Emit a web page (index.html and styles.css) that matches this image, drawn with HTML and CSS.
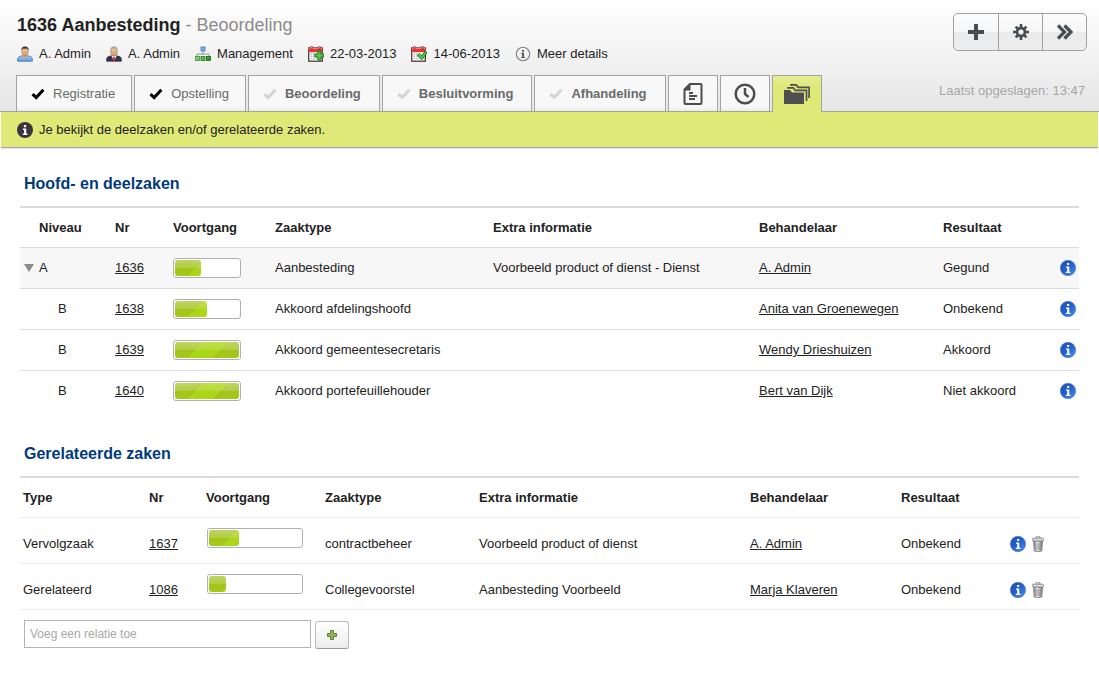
FILE: index.html
```
<!DOCTYPE html>
<html lang="nl">
<head>
<meta charset="utf-8">
<title>1636 Aanbesteding - Beoordeling</title>
<link rel="stylesheet" href="styles.css">
</head>
<body>
<svg class="defs" width="0" height="0" aria-hidden="true">
  <defs>
    <linearGradient id="g-blue" x1="0" y1="0" x2="1" y2="1"><stop offset="0" stop-color="#1d4fb4"/><stop offset=".5" stop-color="#2560cf"/><stop offset="1" stop-color="#4b93f0"/></linearGradient>
    <linearGradient id="g-skin" x1="0" y1="0" x2="0" y2="1"><stop offset="0" stop-color="#f2cfa6"/><stop offset="1" stop-color="#d29a66"/></linearGradient>
    <linearGradient id="g-shirt" x1="0" y1="0" x2="0" y2="1"><stop offset="0" stop-color="#a5cdf2"/><stop offset="1" stop-color="#5c98d6"/></linearGradient>
    <linearGradient id="g-bin" x1="0" y1="0" x2="1" y2="0"><stop offset="0" stop-color="#8a8a8a"/><stop offset=".45" stop-color="#f4f4f4"/><stop offset="1" stop-color="#7a7a7a"/></linearGradient>
    <symbol id="check" viewBox="0 0 14 12"><path d="M1.5 6.2 L5.2 9.6 L12.4 1.8" fill="none" stroke="currentColor" stroke-width="3"/></symbol>
    <symbol id="info-blue" viewBox="0 0 16 16"><circle cx="8" cy="8" r="7.7" fill="url(#g-blue)" stroke="#4b78c4" stroke-width=".6"/><path d="M7 3h2.2v2H7zM6 6.5h3.3v5.2h1.2V13H5.8v-1.3h1.4V7.8H6z" fill="#fff"/></symbol>
    <symbol id="bin" viewBox="0 0 12 16"><path d="M1.5 5h9l-.7 10q-3.8 1.2-7.6 0z" fill="url(#g-bin)" stroke="#777" stroke-width=".8"/><path d="M3.8 7l.3 7M6 7v7M8.2 7l-.3 7" stroke="#777" stroke-width=".8"/><rect x=".5" y="2.2" width="11" height="2.8" rx="1" fill="#dedede" stroke="#777" stroke-width=".8"/><path d="M4 2V.8h4V2" fill="none" stroke="#888" stroke-width=".9"/></symbol>
    <symbol id="calendar" viewBox="0 0 16 16"><rect x=".7" y="2" width="13.6" height="13.2" fill="#f7fafa" stroke="#4c2b2b" stroke-width="1.2"/><path d="M.4 1.6h14.2v4.6H.4z" fill="#e63636"/><path d="M1 2.6h13" stroke="#f88080"/><path d="M3.5 0v3.4M11.5 0v3.4" stroke="#8a2525" stroke-width="1.8"/><path d="M3.5 .5v2M11.5 .5v2" stroke="#eee" stroke-width=".7"/><path d="M2.5 8h5M2.5 10.3h5M2.5 12.6h6" stroke="#b3c9ca" stroke-width="1.4" stroke-dasharray="1.8 .7"/></symbol>
  </defs>
</svg>

<header class="case-header">
  <div class="case-top">
    <div class="case-info">
      <h1 class="case-title">1636 Aanbesteding <span class="case-phase">- Beoordeling</span></h1>
      <ul class="meta">
        <li><svg class="icon" viewBox="0 0 16 16"><path d="M.6 15.3V13q0-2.4 4.2-3.2h6.4q4.2.8 4.2 3.2v2.3z" fill="url(#g-shirt)" stroke="#4b80bb" stroke-width=".8"/><path d="M5.6 8.5h4.8v1.8L8 12.2l-2.4-1.9z" fill="#d59d6b"/><ellipse cx="8" cy="5.4" rx="3.3" ry="4.3" fill="url(#g-skin)" stroke="#a47549" stroke-width=".4"/><path d="M4.5 5Q3.8.4 8 .4T11.5 5Q11 3 9.8 2.4q-2.6.6-4 .4-.9.600-1.300 2.200z" fill="#4a3226"/></svg>A. Admin</li>
        <li><svg class="icon" viewBox="0 0 16 16"><path d="M.6 15.3V13q0-2.4 4.2-3.2h6.4q4.2.8 4.2 3.2v2.3z" fill="#33334b" stroke="#20202f" stroke-width=".6"/><path d="M5.2 9.5h5.6L8 15.3z" fill="#f3f3f6"/><path d="M7.3 10.7h1.4l.5 3.5L8 15.3l-1.2-1.1z" fill="#d02a2a"/><ellipse cx="8" cy="5.4" rx="3.3" ry="4.3" fill="url(#g-skin)" stroke="#94673f" stroke-width=".5"/><path d="M4.500 5Q3.800.4 8 .4T11.500 5Q11 3 9.800 2.400q-2.600.6-4 .4-.9.600-1.300 2.200z" fill="#a8a49e"/></svg>A. Admin</li>
        <li><svg class="icon" viewBox="0 0 16 16"><path d="M8 5v4M2 11V8h12v3" fill="none" stroke="#8f9699" stroke-width="1"/><rect x="6" y="1" width="4" height="4" fill="#78b0f0" stroke="#4278c2" stroke-width=".8"/><rect x=".5" y="10.5" width="4" height="4" fill="#83cf74" stroke="#3f8e34" stroke-width=".8"/><rect x="6" y="10.5" width="4" height="4" fill="#5cb950" stroke="#2b7c25" stroke-width=".8"/><rect x="11.5" y="10.5" width="4" height="4" fill="#2e9c28" stroke="#176a14" stroke-width=".8"/></svg>Management</li>
        <li><svg class="icon" viewBox="0 0 16 16"><use href="#calendar"/><path d="M9.8 5h3v3h3v3h-3v3h-3v-3h-3V8h3z" fill="#55c14a" stroke="#18731b" stroke-width=".9"/></svg>22-03-2013</li>
        <li><svg class="icon" viewBox="0 0 16 16"><use href="#calendar"/><path d="M6.3 9.5l2-2 2.3 2.3L14.5 5l1.3 2-5 6.8z" fill="#55c14a" stroke="#18731b" stroke-width=".9"/></svg>14-06-2013</li>
        <li><svg class="icon" viewBox="0 0 16 16"><circle cx="8" cy="8" r="6.7" fill="#f2f2f2" stroke="#828282" stroke-width="1.1"/><path d="M7.1 4H9v1.700H7.100zM6.300 6.700H9V11h.9v1H6.200v-1h.9V7.700h-.8z" fill="#555"/></svg><a class="plain" href="#details">Meer details</a></li>
      </ul>
    </div>
    <div class="actions">
      <button type="button" aria-label="Toevoegen"><svg width="16" height="16" viewBox="0 0 16 16"><path d="M6 0h4v6h6v4h-6v6H6v-6H0V6h6z" fill="#474e53"/></svg></button>
      <button type="button" aria-label="Instellingen"><svg width="16" height="16" viewBox="0 0 16 16"><g stroke="#474e53" stroke-width="2.6"><path d="M8 0v4M8 12v4M0 8h4M12 8h4M2.6 2.6l2.6 2.6M10.8 10.8l2.6 2.6M2.6 13.4l2.6-2.6M10.8 5.2l2.6-2.6"/></g><circle cx="8" cy="8" r="4" fill="none" stroke="#474e53" stroke-width="2.8"/></svg></button>
      <button type="button" aria-label="Volgende fase"><svg width="16" height="16" viewBox="0 0 16 16"><path d="M1 1.500l6.500 6.500L1 14.500M7.500 1.500L14 8l-6.500 6.500" fill="none" stroke="#474e53" stroke-width="3.2"/></svg></button>
    </div>
  </div>
  <div class="tab-row">
    <nav class="tabs" aria-label="Fasen">
      <a class="tab" href="#registratie"><svg class="check done"><use href="#check"/></svg>Registratie</a>
      <a class="tab" href="#opstelling"><svg class="check done"><use href="#check"/></svg>Opstelling</a>
      <a class="tab open" href="#beoordeling"><svg class="check"><use href="#check"/></svg>Beoordeling</a>
      <a class="tab open" href="#besluitvorming"><svg class="check"><use href="#check"/></svg>Besluitvorming</a>
      <a class="tab open" href="#afhandeling"><svg class="check"><use href="#check"/></svg>Afhandeling</a>
      <a class="tab icon-tab" href="#documenten" aria-label="Documenten"><svg width="20" height="22" viewBox="0 0 20 22"><path d="M7 1h10.5q1 0 1 1v18q0 1-1 1h-15q-1 0-1-1V6.5z" fill="none" stroke="#4c4c4c" stroke-width="2"/><path d="M1 7.5L7.5 1v6.5z" fill="#4c4c4c"/><path d="M6 10h4M6 13h8M6 16h6" stroke="#4c4c4c" stroke-width="1.8"/></svg></a>
      <a class="tab icon-tab" href="#tijdlijn" aria-label="Tijdlijn"><svg width="22" height="22" viewBox="0 0 22 22"><circle cx="11" cy="11" r="9.3" fill="none" stroke="#4c4c4c" stroke-width="2.5"/><path d="M11 5v6l3.500 3" fill="none" stroke="#4c4c4c" stroke-width="2.500"/></svg></a>
      <a class="tab icon-tab active" href="#relaties" aria-label="Relaties" aria-current="page"><svg width="26" height="20" viewBox="0 0 26 20"><path d="M0 6h6l2 2.500h12V20H0z" fill="#4f4f4f"/><path d="M3 3.800h6.200l2 2.500h11.300V17M6 .9h6.200l2 2.500H25.100V14" fill="none" stroke="#4f4f4f" stroke-width="1.700"/></svg></a>
    </nav>
    <p class="saved">Laatst opgeslagen: 13:47</p>
  </div>
</header>

<p class="notice"><svg class="icon" viewBox="0 0 16 16"><circle cx="8" cy="8" r="8" fill="#38353f"/><path d="M6.9 3h2.200v2.200H6.900zM6 6.500h3.200v5h1.200V13H5.800v-1.500h1.300V8H6z" fill="#fff"/></svg>Je bekijkt de deelzaken en/of gerelateerde zaken.</p>

<main class="content">
  <section>
    <h2 class="section-title">Hoofd- en deelzaken</h2>
    <table class="cases main-cases">
      <colgroup><col class="m1"><col class="m2"><col class="m3"><col class="m4"><col class="m5"><col class="m6"><col class="m7"><col class="m8"></colgroup>
      <thead><tr><th class="level">Niveau</th><th>Nr</th><th>Voortgang</th><th>Zaaktype</th><th>Extra informatie</th><th>Behandelaar</th><th>Resultaat</th><th></th></tr></thead>
      <tbody>
        <tr class="current"><td><button class="toggle" type="button" aria-label="Inklappen"></button>A</td><td><a href="#1636">1636</a></td><td><div class="bar"><div class="fill" style="width:41%"></div></div></td><td>Aanbesteding</td><td>Voorbeeld product of dienst - Dienst</td><td><a href="#admin">A. Admin</a></td><td>Gegund</td><td><a class="act" href="#info" aria-label="Info"><svg class="icon"><use href="#info-blue"/></svg></a></td></tr>
        <tr><td class="sub">B</td><td><a href="#1638">1638</a></td><td><div class="bar"><div class="fill" style="width:50%"></div></div></td><td>Akkoord afdelingshoofd</td><td></td><td><a href="#anita">Anita van Groenewegen</a></td><td>Onbekend</td><td><a class="act" href="#info" aria-label="Info"><svg class="icon"><use href="#info-blue"/></svg></a></td></tr>
        <tr><td class="sub">B</td><td><a href="#1639">1639</a></td><td><div class="bar"><div class="fill" style="width:100%"></div></div></td><td>Akkoord gemeentesecretaris</td><td></td><td><a href="#wendy">Wendy Drieshuizen</a></td><td>Akkoord</td><td><a class="act" href="#info" aria-label="Info"><svg class="icon"><use href="#info-blue"/></svg></a></td></tr>
        <tr><td class="sub">B</td><td><a href="#1640">1640</a></td><td><div class="bar"><div class="fill" style="width:100%"></div></div></td><td>Akkoord portefeuillehouder</td><td></td><td><a href="#bert">Bert van Dijk</a></td><td>Niet akkoord</td><td><a class="act" href="#info" aria-label="Info"><svg class="icon"><use href="#info-blue"/></svg></a></td></tr>
      </tbody>
    </table>
  </section>
  <section>
    <h2 class="section-title">Gerelateerde zaken</h2>
    <table class="cases related">
      <colgroup><col class="r1"><col class="r2"><col class="r3"><col class="r4"><col class="r5"><col class="r6"><col class="r7"><col class="r8"></colgroup>
      <thead><tr><th>Type</th><th>Nr</th><th>Voortgang</th><th>Zaaktype</th><th>Extra informatie</th><th>Behandelaar</th><th>Resultaat</th><th></th></tr></thead>
      <tbody>
        <tr><td>Vervolgzaak</td><td><a href="#1637">1637</a></td><td class="bar-cell"><div class="bar wide"><div class="fill" style="width:33%"></div></div></td><td>contractbeheer</td><td>Voorbeeld product of dienst</td><td><a href="#admin">A. Admin</a></td><td>Onbekend</td><td><div class="row-actions"><a class="act" href="#info" aria-label="Info"><svg class="icon"><use href="#info-blue"/></svg></a><button class="delete" type="button" aria-label="Verwijderen"><svg width="12" height="16"><use href="#bin"/></svg></button></div></td></tr>
        <tr><td>Gerelateerd</td><td><a href="#1086">1086</a></td><td class="bar-cell"><div class="bar wide"><div class="fill" style="width:18%"></div></div></td><td>Collegevoorstel</td><td>Aanbesteding Voorbeeld</td><td><a href="#marja">Marja Klaveren</a></td><td>Onbekend</td><td><div class="row-actions"><a class="act" href="#info" aria-label="Info"><svg class="icon"><use href="#info-blue"/></svg></a><button class="delete" type="button" aria-label="Verwijderen"><svg width="12" height="16"><use href="#bin"/></svg></button></div></td></tr>
      </tbody>
    </table>
    <form class="add-relation">
      <input type="text" placeholder="Voeg een relatie toe" aria-label="Voeg een relatie toe">
      <button type="button" aria-label="Relatie toevoegen"><svg width="10" height="10" viewBox="0 0 10 10"><path d="M3.500.5h3v3h3v3h-3v3h-3v-3h-3v-3h3z" fill="#94b464" stroke="#5c8428"/></svg></button>
    </form>
  </section>
</main>
</body>
</html>
```
FILE: styles.css
```
* { box-sizing: border-box; }

body {
  margin: 0;
  background: #fff;
  color: #222;
  font: 13px/20px "Liberation Sans", Arial, sans-serif;
}

h1, h2, p, ul { margin: 0; padding: 0; }
a { color: inherit; }
button { font: inherit; color: inherit; cursor: pointer; }
svg { display: block; flex: none; }
.defs { position: absolute; }
.icon { width: 16px; height: 16px; }
.plain { text-decoration: none; }

.case-header {
  background: linear-gradient(#fff, #e6e6e6);
  border-bottom: 1px solid #a4a4a4;
}

.case-top {
  display: flex;
  justify-content: space-between;
  padding: 13px 12px 0 17px;
}

.case-title { font-size: 18px; line-height: 24px; }
.case-phase { color: #8c8c8c; font-weight: normal; }

.meta {
  display: flex;
  gap: 15px;
  margin-top: 7px;
  list-style: none;
}
.meta li { display: flex; align-items: center; gap: 6px; }

.actions {
  display: flex;
  height: 38px;
  border: 1px solid #a0a0a0;
  border-radius: 5px;
  background: linear-gradient(#fdfdfd, #f6f6f6 50%, #eaeaea 50%, #eee);
}
.actions button {
  display: flex;
  align-items: center;
  justify-content: center;
  width: 44px;
  padding: 0;
  border: 0;
  border-left: 1px solid #a0a0a0;
  background: none;
}
.actions button:first-child { border-left: 0; }

.tab-row {
  display: flex;
  justify-content: space-between;
  padding: 11px 14px 0 16px;
}
.tabs { display: flex; gap: 2px; }
.tab {
  display: flex;
  align-items: center;
  gap: 8px;
  height: 36px;
  padding: 0 16px 0 14px;
  border: 1px solid #a4a4a4;
  border-bottom: 0;
  background: linear-gradient(#f8f8f8 85%, #ededed);
  color: #6a6a6a;
  text-decoration: none;
}
.tab.open { padding-right: 18px; font-weight: bold; }
.check { width: 14px; height: 12px; color: #d4d4d4; }
.check.done { color: #000; }
.tab.icon-tab { width: 50px; padding: 0; justify-content: center; }
.icon-tab.active {
  margin-bottom: -1px;
  height: 37px;
  background: linear-gradient(#e6ed96, #dfe977 30%);
}
.saved { color: #a6a6a6; padding-top: 6px; }

.notice {
  display: flex;
  align-items: center;
  gap: 6px;
  height: 36px;
  margin: 0 1px;
  padding-left: 16px;
  background: #dfe977;
  border-bottom: 1px solid #a4a4a4;
  box-shadow: 0 1px 1px #e8e8e8;
}

.content { padding: 24px 20px; }
.section-title {
  padding: 0 4px;
  color: #003a7d;
  font-size: 16px;
  line-height: 24px;
}
.cases {
  width: 100%;
  margin-top: 10px;
  border-collapse: separate;
  border-spacing: 0;
  border-top: 2px solid #dcdcdc;
  table-layout: fixed;
}
.cases th, .cases td {
  padding: 0 3px;
  text-align: left;
  white-space: nowrap;
}
.cases th { height: 40px; border-bottom: 1px solid #dcdcdc; }
.cases td { height: 41px; border-bottom: 1px solid #dcdcdc; }
.main-cases tbody tr:last-child td { border-bottom-color: transparent; }
.current td { background: #f7f7f7; }
.cases .level { padding-left: 19px; }
.cases .sub { padding-left: 38px; }
.act { display: block; }

.toggle {
  width: 10px;
  height: 8px;
  margin: 0 5px 0 1px;
  padding: 0;
  border: 0;
  background: #8c8c8c;
  clip-path: polygon(0 0, 100% 0, 50% 100%);
}

.m1 { width: 92px; } .m2 { width: 58px; } .m3 { width: 102px; } .m4 { width: 218px; }
.m5 { width: 266px; } .m6 { width: 184px; } .m7 { width: 117px; } .m8 { width: 22px; }
.r1 { width: 126px; } .r2 { width: 57px; } .r3 { width: 119px; } .r4 { width: 154px; }
.r5 { width: 271px; } .r6 { width: 151px; } .r7 { width: 109px; } .r8 { width: 72px; }

.bar {
  width: 68px;
  height: 20px;
  padding: 1px;
  border: 1px solid #b0b0b0;
  border-radius: 3px;
  background: #fff;
}
.bar.wide { width: 96px; }
.fill {
  height: 16px;
  border-radius: 3px;
  background:
    linear-gradient(135deg, transparent 20px, rgba(190, 255, 20, .28) 20px, rgba(190, 255, 20, .28) 38px, transparent 38px),
    linear-gradient(#bfd463, #b2cd40 50%, #a3c41c 50%, #a3c916);
}

section + section { padding-top: 30px; }
.related th { border-bottom-color: #ececec; }
.related td { height: 46px; padding-top: 6px; border-bottom-color: #ececec; }
.related .bar-cell { padding: 0 4px 5px; }
.row-actions { display: flex; align-items: center; gap: 6px; }
.delete { padding: 0; border: 0; background: none; }

.add-relation { display: flex; gap: 4px; padding: 10px 4px; }
.add-relation input {
  width: 287px;
  height: 28px;
  padding: 0 5px;
  border: 1px solid #b4b4b4;
  font: 12px "Liberation Sans", Arial, sans-serif;
}
.add-relation input::placeholder { color: #a8a8a8; }
.add-relation button {
  display: flex;
  align-items: center;
  justify-content: center;
  width: 34px;
  height: 28px;
  margin-top: 1px;
  padding: 0;
  border: 1px solid #bbb;
  border-bottom-color: #999;
  border-radius: 3px;
  background: linear-gradient(#fff, #ececec);
}
```
